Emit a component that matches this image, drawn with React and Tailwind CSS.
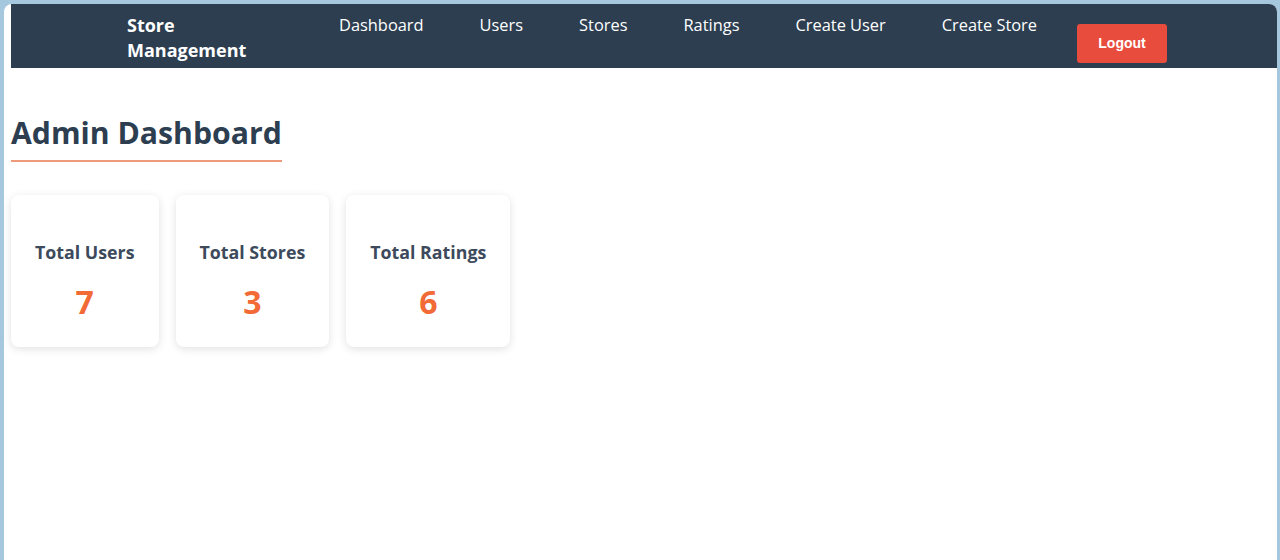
import React from "react";

export default function App() {
  const links = ["Dashboard", "Users", "Stores", "Ratings", "Create User", "Create Store"];
  const stats = [
    ["Total Users", "7"],
    ["Total Stores", "3"],
    ["Total Ratings", "6"],
  ];
  return (
    <div className="h-[560px] overflow-hidden bg-[#a6c8de] pl-1 pt-1 pr-[3px]" style={{ fontFamily: '"Open Sans", "Noto Sans", sans-serif' }}>
      <div className="h-full bg-white rounded-t-lg pl-[7px]">
        <nav className="h-16 bg-[#2c3e50] rounded-tr-lg flex items-start pl-[116px]">
          <div className="w-[212px] mt-[9px] text-white font-bold text-[18px] leading-[25px]">
            Store<br />Management
          </div>
          <ul className="flex gap-[56px] mt-[9px]">
            {links.map((l) => (
              <li key={l} className="text-white text-[16.4px] leading-[24px]">{l}</li>
            ))}
          </ul>
          <button
            className="ml-[40px] mt-[20px] w-[90px] h-[39px] rounded-[3px] bg-[#e74c3c] text-white font-bold text-[14px]"
            style={{ fontFamily: '"Liberation Sans", Arial, sans-serif' }}
          >
            Logout
          </button>
        </nav>
        <main>
          <h1 className="inline-block mt-[45px] text-[30.2px] leading-[40px] font-bold text-[#2c3e50] pb-[7px] border-b-2 border-[#ef9a78]">
            Admin Dashboard
          </h1>
          <div className="flex gap-[17px] mt-[33px]">
            {stats.map(([t, n]) => (
              <div key={t} className="bg-white rounded-lg shadow-[0_2px_8px_rgba(0,0,0,0.12)] px-6 pt-[44px] pb-[25px] text-center">
                <div className="text-[17.8px] leading-[26px] font-bold text-[#3d4a5c]">{t}</div>
                <div className="mt-[17px] text-[32px] leading-[40px] font-bold text-[#f26a35]">{n}</div>
              </div>
            ))}
          </div>
        </main>
      </div>
    </div>
  );
}
